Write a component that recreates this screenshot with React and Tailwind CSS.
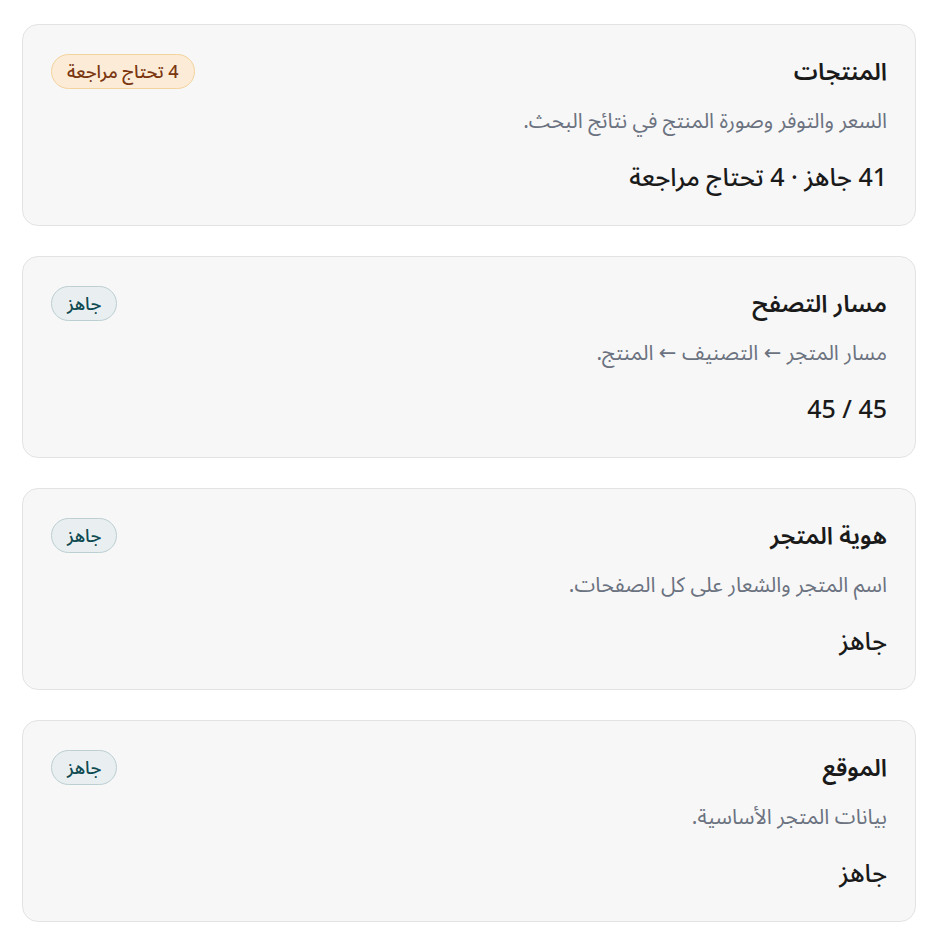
import React from "react";

const cards = [
  {
    title: "المنتجات",
    desc: "السعر والتوفر وصورة المنتج في نتائج البحث.",
    value: "41 جاهز · 4 تحتاج مراجعة",
    badge: "4 تحتاج مراجعة",
    warn: true,
  },
  {
    title: "مسار التصفح",
    desc: "مسار المتجر ← التصنيف ← المنتج.",
    value: "45 / 45",
    badge: "جاهز",
  },
  {
    title: "هوية المتجر",
    desc: "اسم المتجر والشعار على كل الصفحات.",
    value: "جاهز",
    badge: "جاهز",
  },
  {
    title: "الموقع",
    desc: "بيانات المتجر الأساسية.",
    value: "جاهز",
    badge: "جاهز",
  },
];

export default function App() {
  return (
    <div
      dir="rtl"
      className="bg-white min-h-[941px] pt-[24px] pl-[22px] pr-[24px] flex flex-col gap-[30px]"
      style={{ fontFamily: '"Noto Sans", "Noto Sans Arabic", "DejaVu Sans", sans-serif' }}
    >
      {cards.map((c, i) => (
        <div
          key={i}
          className="h-[202px] rounded-[16px] border border-[#e3e3e3] bg-[#f7f7f7] px-[28px] pt-[28px]"
        >
          <div className="flex items-start justify-between">
            <div className="flex flex-col">
              <h2 className="text-[24px] leading-[36px] font-semibold text-[#1a1a1a]">{c.title}</h2>
              <p className="mt-[16px] text-[21px] leading-[30px] text-[#6b7280]">{c.desc}</p>
              <p className="mt-[24px] text-[25px] leading-[34px] font-medium text-[#1a1a1a]">{c.value}</p>
            </div>
            <span
              className={
                c.warn
                  ? "mt-[1px] rounded-full border border-[#f3d39c] bg-[#fcebd6] px-[15px] h-[35px] flex items-center text-[18px] font-medium text-[#7a3610]"
                  : "mt-[1px] rounded-full border border-[#bccfd2] bg-[#e9eef0] px-[15px] h-[35px] flex items-center text-[18px] font-medium text-[#0e4a52]"
              }
            >
              {c.badge}
            </span>
          </div>
        </div>
      ))}
    </div>
  );
}
